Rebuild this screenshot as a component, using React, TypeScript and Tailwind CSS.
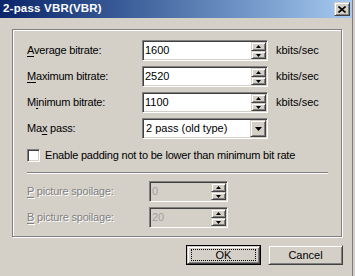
import React from "react";

const font = { fontFamily: '"Liberation Sans", Arial, sans-serif' };

function Raised({ className = "", children }: { className?: string; children?: React.ReactNode }) {
  return (
    <div
      className={
        "flex items-center justify-center bg-[#d4d0c8] border border-t-[#d4d0c8] border-l-[#d4d0c8] border-b-[#404040] border-r-[#404040] shadow-[inset_1px_1px_0_#ffffff,inset_-1px_-1px_0_#808080] " +
        className
      }
    >
      {children}
    </div>
  );
}

function UpArrow() {
  return (
    <svg width="5" height="3" viewBox="0 0 5 3">
      <polygon points="2.5,0 5,3 0,3" fill="#000" />
    </svg>
  );
}

function DownArrow({ w = 5, h = 3 }: { w?: number; h?: number }) {
  return (
    <svg width={w} height={h} viewBox={`0 0 ${w} ${h}`}>
      <polygon points={`0,0 ${w},0 ${w / 2},${h}`} fill="#000" />
    </svg>
  );
}

function SpinEdit({ value, width, disabled }: { value: string; width: string; disabled?: boolean }) {
  return (
    <div
      className={
        "flex h-[21px] border border-t-[#808080] border-l-[#808080] border-b-white border-r-white shadow-[inset_1px_1px_0_#404040,inset_-1px_-1px_0_#d4d0c8] p-[1px] " +
        width +
        (disabled ? " bg-[#d4d0c8]" : " bg-white")
      }
    >
      <div
        className={
          "flex-1 flex items-center pl-[1px] text-[11px] leading-none " +
          (disabled ? "text-[#a0a0a0]" : "text-black")
        }
      >
        {value}
      </div>
      <div className="flex flex-col w-[15px] h-[17px]">
        <Raised className="h-[9px]">
          <UpArrow />
        </Raised>
        <Raised className="h-[8px]">
          <DownArrow />
        </Raised>
      </div>
    </div>
  );
}

function Label({ text, u, width, disabled }: { text: string; u: number; width: string; disabled?: boolean }) {
  return (
    <div
      className={
        "text-[11px] leading-none whitespace-nowrap tracking-[-0.2px] " +
        width +
        (disabled ? " text-[#808080] [text-shadow:1px_1px_0_#ffffff]" : " text-black")
      }
    >
      {text.slice(0, u)}
      <span className="underline underline-offset-2">{text[u]}</span>
      {text.slice(u + 1)}
    </div>
  );
}

export default function App() {
  return (
    <div className="w-[355px] h-[276px] bg-[#d4d0c8] overflow-hidden flex" style={font}>
      <div className="w-[353px] h-full border-r border-[#7c7890] flex flex-col">
        <div className="h-[18px] flex items-center bg-gradient-to-r from-[#0a246a] to-[#a6caf0] pl-[3px] pr-[2px]">
          <span className="text-white font-bold text-[11.5px] leading-none tracking-[0.2px]">2-pass VBR(VBR)</span>
          <div className="ml-auto">
            <Raised className="w-[16px] h-[14px]">
              <svg width="8" height="7" viewBox="0 0 8 7">
                <path d="M0.5 0.5 L7.5 6.5 M7.5 0.5 L0.5 6.5" stroke="#000" strokeWidth="1.6" />
              </svg>
            </Raised>
          </div>
        </div>

        <div className="pl-[12px] pt-[11px] flex flex-col">
          <div className="w-[330px] h-[208px] border border-[#808080] shadow-[1px_1px_0_#ffffff,inset_1px_1px_0_#ffffff] flex flex-col pl-[14px] pt-[10px]">
            <div className="flex items-center">
              <Label text="Average bitrate:" u={0} width="w-[115px]" />
              <SpinEdit value="1600" width="w-[126px]" />
              <span className="ml-[8px] text-[11px] leading-none">kbits/sec</span>
            </div>
            <div className="flex items-center mt-[5px]">
              <Label text="Maximum bitrate:" u={0} width="w-[115px]" />
              <SpinEdit value="2520" width="w-[126px]" />
              <span className="ml-[8px] text-[11px] leading-none">kbits/sec</span>
            </div>
            <div className="flex items-center mt-[5px]">
              <Label text="Minimum bitrate:" u={1} width="w-[115px]" />
              <SpinEdit value="1100" width="w-[126px]" />
              <span className="ml-[8px] text-[11px] leading-none">kbits/sec</span>
            </div>
            <div className="flex items-center mt-[5px]">
              <Label text="Max pass:" u={2} width="w-[115px]" />
              <div className="flex w-[126px] h-[21px] bg-white border border-t-[#808080] border-l-[#808080] border-b-white border-r-white shadow-[inset_1px_1px_0_#404040,inset_-1px_-1px_0_#d4d0c8] p-[1px]">
                <div className="flex-1 flex items-center pl-[2px] text-[11px] leading-none">2 pass (old type)</div>
                <Raised className="w-[16px] h-[17px]">
                  <DownArrow w={7} h={4} />
                </Raised>
              </div>
            </div>

            <div className="flex items-center mt-[10px]">
              <div className="w-[13px] h-[13px] bg-white border border-t-[#808080] border-l-[#808080] border-b-white border-r-white shadow-[inset_1px_1px_0_#404040,inset_-1px_-1px_0_#d4d0c8]" />
              <span className="ml-[5px] text-[11px] leading-none whitespace-nowrap tracking-[-0.2px]">
                Enable padding not to be lower than minimum bit rate
              </span>
            </div>

            <div className="mt-[10px] w-[301px] h-[2px] border-t border-[#808080] border-b border-b-white" />

            <div className="flex items-center mt-[7px]">
              <Label text="P picture spoilage:" u={0} width="w-[122px]" disabled />
              <SpinEdit value="0" width="w-[79px]" disabled />
            </div>
            <div className="flex items-center mt-[5px]">
              <Label text="B picture spoilage:" u={0} width="w-[122px]" disabled />
              <SpinEdit value="20" width="w-[79px]" disabled />
            </div>
          </div>

          <div className="w-[331px] mt-[8px] flex justify-end gap-[7px]">
            <div className="w-[75px] h-[20px] border border-black">
              <Raised className="w-full h-full text-[11px] leading-none">
                <div className="w-[65px] h-[12px] flex items-center justify-center border border-dotted border-black">OK</div>
              </Raised>
            </div>
            <Raised className="w-[75px] h-[20px] text-[11px] leading-none">Cancel</Raised>
          </div>
        </div>
      </div>
    </div>
  );
}
